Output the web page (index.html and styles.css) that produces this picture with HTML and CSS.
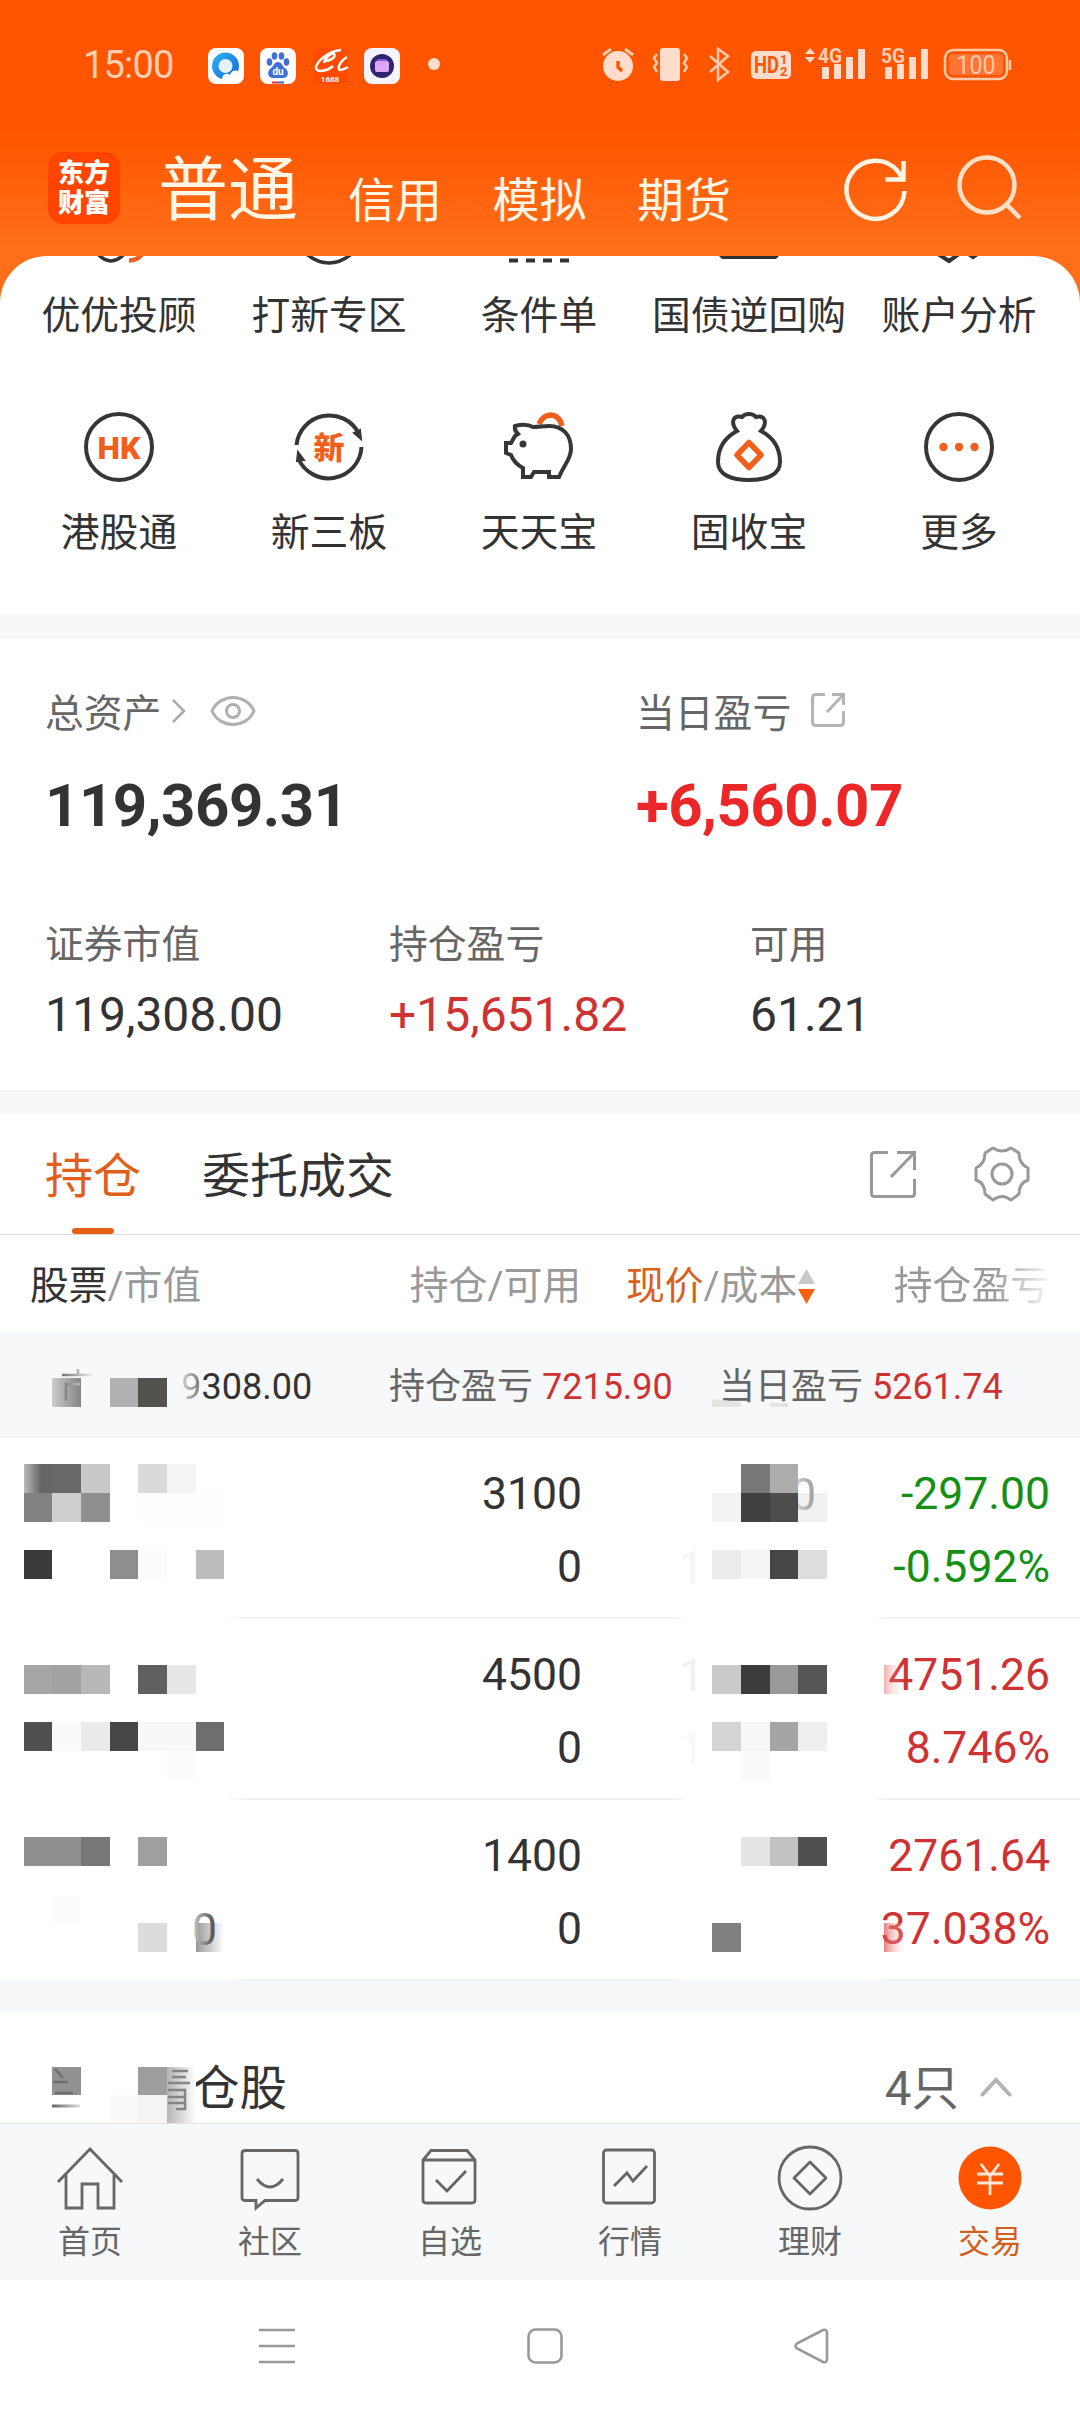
FILE: index.html
```html
<!DOCTYPE html>
<html lang="zh-Hans">
<head>
  <meta charset="UTF-8">
  <title>交易</title>
  <link rel="stylesheet" href="styles.css">
</head>
<body>

<div class="screen">

  <!-- 状态栏 -->
  <div class="status-bar">
    <span class="clock">15:00</span>
    <svg class="status-apps" width="240" height="40" viewBox="204 44 240 40">
      <defs>
        <linearGradient id="q" x1="0" y1="0" x2="1" y2="1"><stop offset="0" stop-color="#35b4f5"/><stop offset="1" stop-color="#0a63d8"/></linearGradient>
      </defs>
      <rect x="208" y="48" width="36" height="36" rx="8" fill="#fff"/>
      <circle cx="225.500" cy="66" r="13.500" fill="url(#q)"/>
      <circle cx="225.500" cy="66" r="7" fill="#e6f3ff"/>
      <path d="M223 81c-3-6 4-9 7-6 2-7 11-5 10 1 3 1 2 5 0 5z" fill="#fff"/>
      <rect x="260" y="48" width="36" height="36" rx="8" fill="#fff"/>
      <g fill="#3f6fd8">
        <ellipse cx="269.500" cy="62" rx="2.800" ry="3.800"/>
        <ellipse cx="274.500" cy="56" rx="2.800" ry="3.800"/>
        <ellipse cx="281.500" cy="56" rx="2.800" ry="3.800"/>
        <ellipse cx="286.500" cy="62" rx="2.800" ry="3.800"/>
        <path d="M278 62c4 0 4 4 7 6 5 4 3 10-2 10h-10c-5 0-7-6-2-10 3-2 3-6 7-6z"/>
      </g>
      <text x="278" y="75" class="tiny" font-size="10" text-anchor="middle">du</text>
      <path d="M272 82.500h6" stroke="#d33" stroke-width="2"/><path d="M278 82.500h6" stroke="#36c" stroke-width="2"/>
      <rect x="313" y="48" width="35" height="36" rx="8" fill="#ff4b00"/>
      <path d="M341 50c-13 1-25 12-25 18 0 5 12 3 17-2M324 61c7 0 12-4 10-7-2-2-9 3-10 9M347 57c-8 5-10 12-7 13 3 0 5-1 8-3" fill="none" stroke="#fff" stroke-width="2.500"/>
      <text x="330" y="82" class="tiny" font-size="8" text-anchor="middle">1688</text>
      <rect x="364" y="48" width="36" height="36" rx="8" fill="#f6f4ff"/>
      <circle cx="382" cy="66" r="12" fill="#30246f"/>
      <rect x="377" y="59" width="10" height="4" rx="1" fill="#7a5be0"/>
      <rect x="375" y="61" width="14" height="11" rx="2" fill="#dfa4f6"/>
      <circle cx="434" cy="64" r="6" fill="#ffdccb"/>
    </svg>
    <svg class="status-icons" width="420" height="40" viewBox="596 44 420 40">
      <g fill="#ffdccb" stroke="none">
        <circle cx="618" cy="66" r="15"/>
        <path d="M618 61v6l4 4" fill="none" stroke="#ff5500" stroke-width="3.500"/>
        <path d="M603 55l8-6M633 55l-8-6" stroke="#ffcbb0" stroke-width="3"/>
        <rect x="660" y="48" width="20" height="33" rx="3"/>
        <path d="M657 54l-3 4 3 5-3 4 3 5M684 54l3 4-3 5 3 4-3 5" fill="none" stroke="#ffcbb0" stroke-width="2.500"/>
        <path d="M710 56l18 16-10 8v-31l10 7-18 16" fill="none" stroke="#ffcbb0" stroke-width="2.500"/>
        <rect x="751" y="51" width="40" height="28" rx="5"/>
        <path d="M805 54l5-6 5 6zM805 57l5 6 5-6z"/>
        <rect x="822" y="67" width="7" height="12" rx="1"/>
        <rect x="834" y="64" width="7" height="15" rx="1"/>
        <rect x="846" y="57" width="7" height="22" rx="1"/>
        <rect x="858" y="49" width="7" height="30" rx="1"/>
        <rect x="885" y="67" width="7" height="12" rx="1"/>
        <rect x="897" y="64" width="7" height="15" rx="1"/>
        <rect x="909" y="57" width="7" height="22" rx="1"/>
        <rect x="921" y="49" width="7" height="30" rx="1"/>
      </g>
      <text x="754" y="73" font-size="23" class="status-text hd" textLength="25" lengthAdjust="spacingAndGlyphs">HD</text>
      <text x="780" y="64" font-size="13" class="status-text hd">1</text>
      <text x="780" y="76" font-size="13" class="status-text hd">2</text>
      <text x="818" y="62.500" font-size="21" class="status-text" textLength="24" lengthAdjust="spacingAndGlyphs">4G</text>
      <text x="881" y="62.500" font-size="21" class="status-text" textLength="24" lengthAdjust="spacingAndGlyphs">5G</text>
      <rect x="945" y="50" width="62" height="29" rx="8" fill="none" stroke="#ffcba9" stroke-width="2.500"/>
      <rect x="949" y="54" width="54" height="21" rx="4" fill="#ff7433"/>
      <path d="M1010 60v10" stroke="#ffcba9" stroke-width="2.500"/>
      <text x="976" y="73.500" font-size="25" class="battery-text" text-anchor="middle" textLength="39" lengthAdjust="spacingAndGlyphs">100</text>
    </svg>
  </div>

  <!-- 顶部账户切换 -->
  <div class="title-bar">
    <div class="logo"><span>东方</span><span>财富</span></div>
    <div class="accounts">
      <span class="account active">普通</span>
      <span class="account">信用</span>
      <span class="account">模拟</span>
      <span class="account">期货</span>
    </div>
    <svg class="icon-refresh" width="66" height="66" viewBox="843 156 66 66" fill="none" stroke="#fff3e4" stroke-width="4.500">
      <path d="M904.500 190a29 29 0 1 1-6.500-19.500L903 178M903.500 160v18.500h-18"/>
    </svg>
    <svg class="icon-search" width="66" height="66" viewBox="956 154 66 66" fill="none" stroke="#ffdfc6" stroke-width="4.500">
      <circle cx="987" cy="185" r="27.500"/><path d="M1006 204l14 14"/>
    </svg>
  </div>

  <!-- 功能入口 -->
  <div class="sheet">
    <div class="menu menu-top">
      <div class="menu-item">
        <svg width="70" height="13" viewBox="0 0 70 13" fill="none" stroke-width="3.500"><path d="M12-4q15 18 30 0" stroke="#333"/><path d="M45 4.500q10 0 15-9" stroke="#f06020" stroke-width="4.500"/></svg>
        <span>优优投顾</span>
      </div>
      <div class="menu-item">
        <svg width="70" height="13" viewBox="0 0 70 13" fill="none" stroke="#333" stroke-width="3.500"><path d="M10-4q25 22 50 0"/></svg>
        <span>打新专区</span>
      </div>
      <div class="menu-item">
        <svg width="70" height="13" viewBox="0 0 70 13" fill="none" stroke="#333" stroke-width="4"><path d="M5 4.500h62" stroke-dasharray="9 8"/></svg>
        <span>条件单</span>
      </div>
      <div class="menu-item">
        <svg width="70" height="13" viewBox="0 0 70 13" fill="#333"><path d="M5 0h60l-3 3H8z"/></svg>
        <span>国债逆回购</span>
      </div>
      <div class="menu-item">
        <svg width="70" height="13" viewBox="0 0 70 13" fill="none" stroke="#333" stroke-width="4"><path d="M14-2l11 7 10-7M43-3l6 4 6-4"/></svg>
        <span>账户分析</span>
      </div>
    </div>
    <div class="menu menu-icons">
      <div class="menu-item">
        <svg width="72" height="72" viewBox="0 0 72 72" fill="none" stroke="#363636" stroke-width="4"><circle cx="36" cy="36" r="33"/>
          <text x="36" y="47.500" class="hk" text-anchor="middle">HK</text></svg>
        <span>港股通</span>
      </div>
      <div class="menu-item">
        <svg width="72" height="72" viewBox="0 0 72 72" fill="none" stroke="#363636" stroke-width="4"><path d="M3.500 34a33 33 0 0 1 62-12M68.500 36a33 33 0 0 1-63 12"/><path d="M61 22l6-3 1 9zM11 49l-7 1 1-9z" fill="#363636" stroke-width="2"/>
          <text x="36" y="48" class="xin" text-anchor="middle">新</text></svg>
        <span>新三板</span>
      </div>
      <div class="menu-item">
        <svg width="72" height="72" viewBox="0 0 72 72" fill="none" stroke="#363636" stroke-width="4"><path d="M36 13q4-9 12-9 9 1 11 11" stroke="#f0601c" stroke-width="5.500"/><path d="M12 15q11-3 18 1c6 0 10-1 16-1 14 0 22 9 22 23 0 10-7 16-12 28H46v-5H31l-3 5H20v-9C14 54 10 49 8 44L3 42V32h5l4-7 3-2q-4-4-3-8z"/><circle cx="20" cy="33" r="3.500" fill="#363636" stroke="none"/></svg>
        <span>天天宝</span>
      </div>
      <div class="menu-item">
        <svg width="72" height="72" viewBox="0 0 72 72" fill="none" stroke="#363636" stroke-width="4"><path d="M24 20c-7-9-4-16 5-14 3-4 11-4 14 0 9-2 12 5 5 14 15 8 19 20 19 31 0 13-14 18-31 18S5 64 5 51c0-11 4-23 19-31z"/><path d="M36 31.500l12 12.500-12 12.500L24 44z" stroke="#f0601c" stroke-width="5.500" stroke-linejoin="round"/></svg>
        <span>固收宝</span>
      </div>
      <div class="menu-item">
        <svg width="72" height="72" viewBox="0 0 72 72"><circle cx="36" cy="36" r="33" fill="none" stroke="#363636" stroke-width="4"/><g fill="#f0601c"><circle cx="20.500" cy="36" r="4.200"/><circle cx="36" cy="36" r="4.200"/><circle cx="51.500" cy="36" r="4.200"/></g></svg>
        <span>更多</span>
      </div>
    </div>
  </div>

  <!-- 资产 -->
  <div class="assets">
    <div class="assets-main">
      <div class="asset-total">
        <div class="label">总资产
          <svg class="arrow" width="16" height="26" viewBox="0 0 16 26" fill="none" stroke="#aaa" stroke-width="2.500"><path d="M2 2l11 11L2 24"/></svg>
          <svg class="eye" width="46" height="32" viewBox="0 0 46 32" fill="none" stroke="#b0b0b0" stroke-width="3"><path d="M2 16C10-2 36-2 44 16 36 34 10 34 2 16z"/><circle cx="23" cy="16" r="6.500"/></svg>
        </div>
        <div class="big">119,369.31</div>
      </div>
      <div class="asset-day">
        <div class="label">当日盈亏
          <svg class="share" width="36" height="36" viewBox="0 0 36 36" fill="none" stroke="#b5b5b5" stroke-width="3"><path d="M15 2.500H6Q2.500 2.500 2.500 6v24q0 3.500 3.500 3.500h24q3.500 0 3.500-3.500V19M22 2.500h11.500V13M33 3L17 20"/></svg>
        </div>
        <div class="big up-strong">+6,560.07</div>
      </div>
    </div>
    <div class="assets-sub">
      <div><div class="label">证券市值</div><div class="value">119,308.00</div></div>
      <div><div class="label">持仓盈亏</div><div class="value up">+15,651.82</div></div>
      <div><div class="label">可用</div><div class="value">61.21</div></div>
    </div>
  </div>

  <!-- 持仓 -->
  <div class="tabs">
    <span class="tab active">持仓</span>
    <span class="tab">委托成交</span>
    <svg class="tab-share" width="48" height="48" viewBox="0 0 48 48" fill="none" stroke="#999" stroke-width="3"><path d="M19 2.500H5.500Q2.500 2.500 2.500 5.500v38q0 3 3 3h37q3 0 3-3V29M28 2.500h17.500V20M44.500 3.500L22 27"/></svg>
    <svg class="tab-gear" width="56" height="56" viewBox="0 0 56 56" fill="none" stroke="#999" stroke-width="3"><path d="M19 2q9 6 18 0l8 5q0 11 9 15v12q-9 3-9 14l-8 6q-9-7-18 0l-8-6q0-11-9-14V22q9-4 9-15z" stroke-linejoin="round"/><circle cx="28" cy="28" r="10"/></svg>
  </div>

  <div class="grid-row table-head">
    <span><b>股票</b>/市值</span>
    <span>持仓/可用</span>
    <span class="sort"><b class="on">现价</b>/成本<svg width="17" height="36" viewBox="0 0 17 36"><path d="M8.500 0L17 15H0z" fill="#c8c8c8"/><path d="M0 20h17L8.500 35z" fill="#f8600f"/></svg></span>
    <span class="fade">持仓盈亏</span>
  </div>

  <div class="summary">
    <span class="sum-value"><i>19</i>308.00</span>
    <span class="sum-item">持仓盈亏 <em>7215.90</em></span>
    <span class="sum-item">当日盈亏 <em>5261.74</em></span>
    <svg class="mosaic" width="1080" height="107" viewBox="0 0 1080 107">
      <defs>
        <linearGradient id="g1"><stop offset="0" stop-color="#ccc"/><stop offset="1" stop-color="#858585"/></linearGradient>
        <linearGradient id="g2"><stop offset="0" stop-color="#777"/><stop offset="1" stop-color="#eee"/></linearGradient>
      </defs>
      <rect x="52" y="47" width="29" height="29" fill="url(#g1)"/>
      <rect x="110" y="47" width="28" height="29" fill="#b0b2b1"/>
      <rect x="138" y="47" width="29" height="29" fill="#52524e"/>
      <path d="M62 44h31M78 38v6M66 70V53h14" fill="none" stroke="url(#g2)" stroke-width="2.500"/>
      <path d="M712 76v-8l29 3v5zM770 76v-4h18v4z" fill="#e4e4e5"/>
    </svg>
  </div>

  <div class="holdings">
    <div class="grid-row holding">
      <span></span>
      <span>3100<br>0</span>
      <span></span>
      <span class="down">-297.00<br>-0.592%</span>
      <svg class="mosaic" width="1080" height="181" viewBox="0 0 1080 181">
        <defs>
          <linearGradient id="g3"><stop offset="0" stop-color="#bbb"/><stop offset=".6" stop-color="#666"/></linearGradient>
          <linearGradient id="g4"><stop offset="0" stop-color="#ddd"/><stop offset="1" stop-color="#999"/></linearGradient>
        </defs>
        <rect x="24" y="26" width="28" height="29" fill="url(#g3)"/>
        <rect x="52" y="26" width="29" height="29" fill="#686868"/>
        <rect x="81" y="26" width="29" height="29" fill="#c9c9c9"/>
        <rect x="138" y="26" width="29" height="29" fill="#dadada"/>
        <rect x="167" y="26" width="29" height="29" fill="#f5f5f5"/>
        <rect x="24" y="55" width="28" height="29" fill="#828282"/>
        <rect x="52" y="55" width="29" height="29" fill="#cecece"/>
        <rect x="81" y="55" width="29" height="29" fill="#8f8f8f"/>
        <rect x="138" y="55" width="86" height="29" fill="#fdfdfd"/>
        <rect x="24" y="112" width="28" height="29" fill="#3a3a3a"/>
        <rect x="110" y="112" width="28" height="29" fill="#8e8e8e"/>
        <rect x="138" y="112" width="29" height="29" fill="#fcfcfc"/>
        <rect x="196" y="112" width="28" height="29" fill="#bcbcbc"/>
        <rect x="798" y="55" width="29" height="29" fill="#f0f0f0"/>
        <text x="791" y="72" fill="url(#g4)">0</text>
        <rect x="741" y="26" width="29" height="29" fill="#777"/>
        <rect x="770" y="26" width="28" height="29" fill="#acacac"/>
        <rect x="712" y="55" width="29" height="29" fill="#f2f2f2"/>
        <rect x="741" y="55" width="29" height="29" fill="#404040"/>
        <rect x="770" y="55" width="28" height="29" fill="#4c4c4c"/>
        <text x="679" y="145" fill="#f5f5f5">1</text>
        <rect x="712" y="112" width="29" height="29" fill="#ececec"/>
        <rect x="741" y="112" width="29" height="29" fill="#f5f5f5"/>
        <rect x="770" y="112" width="28" height="29" fill="#464646"/>
        <rect x="798" y="112" width="29" height="29" fill="#dedede"/>
      </svg>
    </div>
    <div class="grid-row holding">
      <span></span>
      <span>4500<br>0</span>
      <span></span>
      <span class="up">4751.26<br>8.746%</span>
      <svg class="mosaic" width="1080" height="181" viewBox="0 0 1080 181">
        <defs>
          <linearGradient id="g5"><stop offset="0" stop-color="#e23a3a" stop-opacity=".4"/><stop offset="1" stop-color="#fff" stop-opacity="0"/></linearGradient>
        </defs>
        <rect x="24" y="46" width="28" height="29" fill="#a6a6a6"/>
        <rect x="52" y="46" width="29" height="29" fill="#a2a2a2"/>
        <rect x="81" y="46" width="29" height="29" fill="#b8b8b8"/>
        <rect x="138" y="46" width="29" height="29" fill="#606060"/>
        <rect x="167" y="46" width="29" height="29" fill="#e7e7e7"/>
        <rect x="24" y="103" width="28" height="29" fill="#505050"/>
        <rect x="52" y="103" width="29" height="29" fill="#fafafa"/>
        <rect x="81" y="103" width="29" height="29" fill="#ebebeb"/>
        <rect x="110" y="103" width="28" height="29" fill="#464646"/>
        <rect x="138" y="103" width="58" height="29" fill="#f8f8f8"/>
        <rect x="196" y="103" width="28" height="29" fill="#6e6e6e"/>
        <rect x="167" y="132" width="29" height="29" fill="#fbfbfb"/>
        <text x="679" y="72" fill="#f1f1f1">1</text>
        <rect x="712" y="46" width="29" height="29" fill="#cbcbcb"/>
        <rect x="741" y="46" width="29" height="29" fill="#3c3c3c"/>
        <rect x="770" y="46" width="28" height="29" fill="#999"/>
        <rect x="798" y="46" width="29" height="29" fill="#555"/>
        <text x="679" y="145" fill="#f8f8f8">1</text>
        <rect x="712" y="103" width="29" height="29" fill="#d4d4d4"/>
        <rect x="741" y="103" width="29" height="29" fill="#f7f7f7"/>
        <rect x="770" y="103" width="28" height="29" fill="#a5a5a5"/>
        <rect x="798" y="103" width="29" height="29" fill="#eee"/>
        <rect x="741" y="132" width="29" height="29" fill="#fafafa"/>
        <rect x="884" y="46" width="22" height="29" fill="url(#g5)"/>
      </svg>
    </div>
    <div class="grid-row holding">
      <span></span>
      <span>1400<br>0</span>
      <span></span>
      <span class="up">2761.64<br>37.038%</span>
      <svg class="mosaic" width="1080" height="181" viewBox="0 0 1080 181">
        <defs>
          <linearGradient id="g6"><stop offset="0" stop-color="#999"/><stop offset="1" stop-color="#fff"/></linearGradient>
          <linearGradient id="g7"><stop offset="0" stop-color="#ccc"/><stop offset="1" stop-color="#444"/></linearGradient>
          <linearGradient id="g8"><stop offset="0" stop-color="#e04848" stop-opacity=".7"/><stop offset="1" stop-color="#fff" stop-opacity="0"/></linearGradient>
        </defs>
        <rect x="24" y="37" width="57" height="29" fill="#8f8f8f"/>
        <rect x="81" y="37" width="29" height="29" fill="#777"/>
        <rect x="138" y="37" width="29" height="29" fill="#9f9f9f"/>
        <rect x="52" y="95" width="29" height="28" fill="#fcfcfc"/>
        <rect x="138" y="123" width="29" height="29" fill="#dcdcdc"/>
        <rect x="196" y="123" width="28" height="29" fill="url(#g6)"/>
        <text x="192" y="145" fill="url(#g7)">0</text>
        <rect x="741" y="37" width="29" height="29" fill="#e4e4e4"/>
        <rect x="770" y="37" width="28" height="29" fill="#c2c2c2"/>
        <rect x="798" y="37" width="29" height="29" fill="#505050"/>
        <rect x="712" y="123" width="29" height="29" fill="#808080"/>
        <rect x="884" y="123" width="24" height="29" fill="url(#g8)"/>
      </svg>
    </div>
  </div>

  <!-- 当日清仓 -->
  <div class="cleared">
    <span class="cleared-title">仓股</span>
    <span class="cleared-count">4只</span>
    <svg width="32" height="20" viewBox="0 0 32 20" fill="none" stroke="#b3b3b3" stroke-width="4" stroke-linecap="round"><path d="M2.500 17.500L16 3l13.500 14.500"/></svg>
    <svg class="mosaic" width="1080" height="112" viewBox="0 0 1080 112">
      <defs>
        <linearGradient id="g9"><stop offset="0" stop-color="#b5b5b5"/><stop offset="1" stop-color="#fff"/></linearGradient>
        <linearGradient id="g10"><stop offset="0" stop-color="#666"/><stop offset="1" stop-color="#ddd"/></linearGradient>
      </defs>
      <rect x="52" y="56" width="29" height="28" fill="#929292"/>
      <path d="M53 71h15M55 82h18M55 58l8 9" stroke="#6e6e6e" stroke-width="2.500"/>
      <path d="M52 93.500h28v3H52z" fill="url(#g10)"/>
      <rect x="138" y="56" width="29" height="28" fill="#9e9e9e"/>
      <rect x="110" y="84" width="28" height="28" fill="#fafafa"/>
      <rect x="138" y="84" width="29" height="28" fill="#f5f5f5"/>
      <rect x="167" y="56" width="29" height="56" fill="url(#g9)"/>
      <path d="M172 60h16M172 66h14M168 72h22M168 79h17v19h-9M168 86h17M168 92h17" fill="none" stroke="#858585" stroke-width="2.500"/>
    </svg>
  </div>

  <!-- 底部导航 -->
  <div class="bottom-nav">
    <div class="nav-item">
      <svg width="68" height="68" viewBox="0 0 68 68"><path d="M2 37L34 4l32 33M10 30v33h16V39h16v24h16V30"/></svg>
      <span>首页</span>
    </div>
    <div class="nav-item">
      <svg width="68" height="68" viewBox="0 0 68 68"><path d="M9 5.500h50q3 0 3 3v44q0 3-3 3H29L20 63v-7.500H9q-3 0-3-3v-44q0-3 3-3zM21 34q13 16 26 0"/></svg>
      <span>社区</span>
    </div>
    <div class="nav-item">
      <svg width="68" height="68" viewBox="0 0 68 68"><path d="M7 15v40q0 3 3 3h46q3 0 3-3V15l-8-9.500H15zM7 15h52M20 35l11 11 19-20"/></svg>
      <span>自选</span>
    </div>
    <div class="nav-item">
      <svg width="68" height="68" viewBox="0 0 68 68"><rect x="7.500" y="5" width="51" height="53" rx="3"/><path d="M18 41l13-13 6 8 14-15"/></svg>
      <span>行情</span>
    </div>
    <div class="nav-item">
      <svg width="68" height="68" viewBox="0 0 68 68"><circle cx="34" cy="33" r="31"/><path d="M34 17l16 16-16 16-16-16z" stroke-linejoin="round"/></svg>
      <span>理财</span>
    </div>
    <div class="nav-item current">
      <svg width="68" height="68" viewBox="0 0 68 68"><circle cx="34" cy="33" r="31.500"/><path d="M25 19l9 12 9-12M34 31v19M21 29h26M21 38h26"/></svg>
      <span>交易</span>
    </div>
  </div>

  <!-- 系统导航键 -->
  <div class="system-nav">
    <svg width="36" height="36" viewBox="0 0 36 36"><path d="M0 2h36M0 18h36M0 34h36"/></svg>
    <svg width="36" height="36" viewBox="0 0 36 36"><rect x="1.500" y="1.500" width="33" height="33" rx="7"/></svg>
    <svg width="36" height="36" viewBox="0 0 36 36"><path d="M3 15.500L29 2q4-1 4 3v26q0 4-4 3L3 20.500q-3-2.500 0-5z"/></svg>
  </div>

</div>

</body>
</html>
```

FILE: styles.css
```css
* {
  box-sizing: border-box;
}
body {
  margin: 0;
  font-family: Roboto, "Noto Sans CJK SC", sans-serif;
  color: #333;
}
svg {
  display: block;
  flex: none;
}
.screen {
  width: 1080px;
  height: 2412px;
  overflow: hidden;
  display: flex;
  flex-direction: column;
  background: linear-gradient(#ff5500 130px, #ff6f1a 250px, #ff6f1a 320px, #f7f8fa 320px);
}

/* 状态栏 */
.status-bar {
  height: 128px;
  padding: 44px 64px 0 83px;
  display: flex;
}
.clock {
  width: 121px;
  font-size: 38px;
  line-height: 42px;
  letter-spacing: -0.8px;
  color: #ffcfb0;
}
.status-icons {
  margin-left: auto;
}
.tiny {
  font-weight: 700;
  fill: #fff;
}
.status-text {
  font-weight: 700;
  fill: #ffcfb5;
}
.status-text.hd {
  fill: #f25a10;
}
.battery-text {
  fill: #ffcba9;
}

/* 顶部 */
.title-bar {
  height: 128px;
  padding: 24px 58px 0 48px;
  display: flex;
}
.logo {
  width: 72px;
  height: 72px;
  padding-top: 6px;
  border-radius: 15px;
  background: #ff4500;
  color: #fff;
  font-size: 26px;
  font-weight: 900;
  line-height: 30px;
  text-align: center;
}
.logo span {
  display: block;
}
.accounts {
  display: flex;
  align-items: baseline;
  margin: -3px 0 0 38px;
  color: #fff6e6;
}
.account {
  position: relative;
  top: 2px;
  width: 144.5px;
  font-size: 47px;
  line-height: 84px;
}
.account.active {
  top: 0;
  width: 190px;
  font-size: 70px;
}
.icon-refresh {
  margin: 5px 47px 0 auto;
}
.icon-search {
  margin-top: 2px;
}

/* 功能入口 */
.sheet {
  height: 359px;
  background: #fff;
  border-radius: 47px 47px 0 0;
}
.menu {
  display: grid;
  grid-template-columns: repeat(5, 210px);
  padding-left: 14px;
  font-size: 38.8px;
  line-height: 56px;
}
.menu-item {
  display: flex;
  flex-direction: column;
  align-items: center;
  white-space: nowrap;
}
.menu-top {
  height: 155px;
}
.menu-top span {
  margin-top: 19px;
}
.menu-icons span {
  margin-top: 22px;
}
.hk, .xin {
  font-size: 31px;
  font-weight: 900;
  fill: #f0601c;
  stroke: none;
}
.hk {
  font-size: 32px;
}

/* 资产 */
.assets {
  height: 451px;
  margin-top: 24px;
  padding-top: 43px;
  background: #fff;
}
.assets-main {
  display: grid;
  grid-template-columns: 591px 1fr;
  padding-left: 45px;
  height: 231px;
}
.label {
  display: flex;
  align-items: center;
  height: 56px;
  font-size: 38.8px;
  color: #666;
}
.arrow {
  margin: 2px 0 0 10px;
}
.eye {
  margin: 2px 0 0 23px;
}
.share {
  margin: 0 0 0 19px;
}
.big {
  margin-top: 32px;
  font-size: 60px;
  font-weight: 700;
  line-height: 72px;
  letter-spacing: -0.5px;
}
.assets-sub {
  display: grid;
  grid-template-columns: 344px 361px 1fr;
  padding-left: 45px;
}
.value {
  margin-top: 16px;
  font-size: 48px;
  line-height: 60px;
}
.up-strong {
  color: #eb2727;
}
.up {
  color: #cf3232;
}
.down {
  color: #149014;
}

/* 持仓标签 */
.tabs {
  height: 121px;
  margin-top: 24px;
  padding: 0 50px 0 45px;
  display: flex;
  background: #fff;
  border-bottom: 1px solid #dcdcdc;
  font-size: 48px;
  line-height: 126px;
}
.tab {
  position: relative;
  margin-right: 61px;
}
.tab.active {
  color: #e0601a;
}
.tab.active::after {
  content: "";
  position: absolute;
  left: 27px;
  bottom: 0;
  width: 42px;
  height: 6px;
  border-radius: 3px;
  background: #e85f14;
}
.tab-share {
  margin: 36px 57px 0 auto;
}
.tab-gear {
  margin-top: 32px;
}

/* 表格 */
.grid-row {
  display: grid;
  grid-template-columns: 381px 200px 246px 222px;
  padding-right: 31px;
}
.grid-row > span {
  text-align: right;
}
.table-head {
  height: 96px;
  background: #fff;
  font-size: 38.8px;
  line-height: 102px;
  color: #999;
}
.table-head > span:first-child {
  padding-left: 30px;
  text-align: left;
}
.table-head b {
  font-weight: 400;
  color: #333;
}
.table-head b.on {
  color: #d8611c;
}
.table-head .sort {
  display: flex;
  align-items: center;
  padding-left: 45px;
}
.table-head .sort svg {
  margin: 2px 0 0 1px;
}
.table-head .fade {
  background: linear-gradient(90deg, #999 165px, #f2f2f2 220px);
  background-clip: text;
  color: transparent;
}

.summary {
  position: relative;
  height: 107px;
  padding-left: 161px;
  display: flex;
  font-size: 36px;
  line-height: 113px;
  background: #f7f8fa;
}
.sum-value {
  width: 228px;
}
.sum-value i {
  font-style: normal;
  background: linear-gradient(90deg, #f7f8fa 30%, #777);
  background-clip: text;
  color: transparent;
}
.sum-item {
  width: 330px;
  color: #666;
}
.sum-item em {
  font-style: normal;
  color: #cf3232;
}

.mosaic {
  position: absolute;
  left: 0;
  top: 0;
  font-size: 44.5px;
}
.holdings {
  background: #fff;
}
.holding {
  position: relative;
  height: 181px;
  padding-top: 20px;
  padding-right: 30px;
  grid-template-columns: 382px 200px 246px 222px;
  font-size: 44.5px;
  line-height: 73px;
  background: linear-gradient(90deg, transparent 225px, #f0f0f0 250px, #f0f0f0 670px, transparent 690px, transparent 870px, #f0f0f0 890px) left bottom / 100% 2px no-repeat;
}

/* 清仓 */
.cleared {
  position: relative;
  height: 112px;
  margin-top: 30px;
  padding: 0 68px 0 192px;
  display: flex;
  background: #fff;
  font-size: 47.5px;
  line-height: 156px;
  overflow: hidden;
}
.cleared-count {
  margin: 0 21px 0 auto;
  color: #666;
}
.cleared-count + svg {
  margin-top: 66px;
}

/* 底部导航 */
.bottom-nav {
  height: 157px;
  padding-top: 21px;
  display: grid;
  grid-template-columns: repeat(6, 1fr);
  background: #f7f8fa;
  border-top: 1px solid #e3e3e3;
  font-size: 32px;
  line-height: 44px;
  color: #666;
}
.nav-item {
  display: flex;
  flex-direction: column;
  align-items: center;
}
.nav-item svg {
  fill: none;
  stroke: #666;
  stroke-width: 2.8;
}
.nav-item span {
  margin-top: 7px;
}
.nav-item.current {
  color: #d45f1c;
}
.nav-item.current circle {
  fill: #ff5500;
  stroke: none;
}
.nav-item.current path {
  stroke: #ffe6d5;
}

.system-nav {
  flex: 1;
  padding: 48px 250px 0 259px;
  display: flex;
  justify-content: space-between;
  background: #fff;
}
.system-nav svg {
  fill: none;
  stroke: #999;
  stroke-width: 2.6;
}
```
